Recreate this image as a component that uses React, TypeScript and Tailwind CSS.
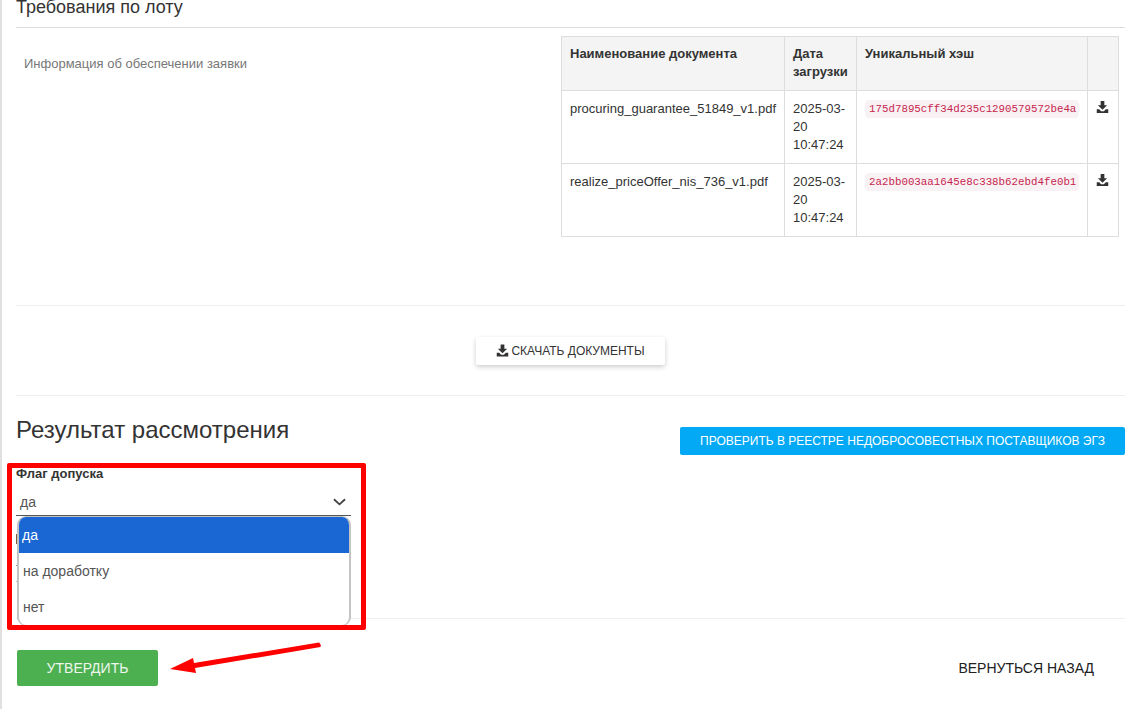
function DownloadIcon({ className }: { className?: string }) {
  return (
    <svg viewBox="0 0 14 14" className={className} fill="currentColor">
      <path d="M5 0.5h4v4.5h3L7 10 2 5h3z" />
      <path d="M0.8 9.5h2.7L5.5 11.5h3l2-2h2.7v4H0.8z" />
    </svg>
  );
}

const docs = [
  { name: 'procuring_guarantee_51849_v1.pdf', hash: '175d7895cff34d235c1290579572be4a' },
  { name: 'realize_priceOffer_nis_736_v1.pdf', hash: '2a2bb003aa1645e8c338b62ebd4fe0b1' },
];

function DocsTable() {
  return (
    <table className="w-[557px] table-fixed border-collapse text-[13px] leading-[18px] text-[#333]">
      <colgroup>
        <col className="w-[223px]" />
        <col className="w-[72px]" />
        <col className="w-[231px]" />
        <col className="w-[31px]" />
      </colgroup>
      <thead>
        <tr className="h-[54px] bg-[#f4f4f4] align-top font-bold">
          <th className="border border-[#ddd] px-2 py-2 text-left">Наименование документа</th>
          <th className="border border-[#ddd] px-2 py-2 text-left">Дата загрузки</th>
          <th className="border border-[#ddd] px-2 py-2 text-left">Уникальный хэш</th>
          <th className="border border-[#ddd]" />
        </tr>
      </thead>
      <tbody>
        {docs.map((doc) => (
          <tr key={doc.hash} className="h-[73px] align-top">
            <td className="border border-[#ddd] px-2 py-[9px] whitespace-nowrap">{doc.name}</td>
            <td className="border border-[#ddd] px-2 py-[9px]">2025-03-20 10:47:24</td>
            <td className="border border-[#ddd] px-2 py-[9px]">
              <code className="block w-[214px] rounded-[4px] bg-[#f9f2f4] px-1 font-['Liberation_Mono',monospace] text-[10.8px] leading-[18px] whitespace-nowrap text-[#c7254e]">
                {doc.hash}
              </code>
            </td>
            <td className="border border-[#ddd] px-2 py-[9px]">
              <DownloadIcon className="h-[14px] w-[13px] text-[#333]" />
            </td>
          </tr>
        ))}
      </tbody>
    </table>
  );
}

export default function App() {
  return (
    <div className="relative h-[709px] w-[1141px] overflow-hidden border-l-2 border-[#e0e0e0] bg-white font-['Liberation_Sans',Arial,sans-serif] text-[#333]">
      <div className="w-[1123px] pl-[14px]">
        {/* Lot requirements */}
        <h3 className="-mt-[3px] h-[31px] border-b border-[#ddd] text-[18px] leading-[20px] text-[#333]">Требования по лоту</h3>
        <div className="flex h-[278px] items-start justify-between border-b border-[#eee] pt-2 pr-[6px]">
          <p className="pt-[19px] pl-2 text-[13px] leading-[18px] text-[#777]">Информация об обеспечении заявки</p>
          <DocsTable />
        </div>
        <div className="flex h-[90px] items-center justify-center border-b border-[#eee]">
          <button className="flex h-[28px] w-[189px] items-center justify-center gap-[2px] rounded-[2px] bg-white text-[12px] text-[#333] shadow-[0_2px_5px_0_rgba(0,0,0,0.2)]">
            <DownloadIcon className="h-[13px] w-[13px]" />
            СКАЧАТЬ ДОКУМЕНТЫ
          </button>
        </div>

        {/* Review result */}
        <div className="flex h-[223px] items-start justify-between border-b border-[#eee]">
          <div className="w-[335px]">
            <h2 className="mt-[20px] text-[24px] leading-[27px] text-[#333]">Результат рассмотрения</h2>
            <label className="mt-[22px] block text-[13px] leading-[18px] font-bold text-[#333]">Флаг допуска</label>
            <div className="mt-[8px] flex h-[25px] items-center justify-between border-b border-[#555] pr-[5px] pb-[2px] pl-1 text-[14px] text-[#555]">
              <span>да</span>
              <svg viewBox="0 0 14 8" className="h-[8px] w-[13px]" fill="none" stroke="#444" strokeWidth="2">
                <path d="M1 1l6 5.5L13 1" />
              </svg>
            </div>
            {/* Next field, almost fully covered by the open list */}
            <div className="mt-[18px] h-[10px] w-[2px] bg-[#7a5c3c]" />
            <div className="mt-[21px] h-px w-[3px] bg-[#888]" />
            <div className="mt-[15px] h-px w-full bg-[#bbb]" />
          </div>
          <button className="mt-[31px] h-[28px] w-[445px] rounded-[2px] bg-[#03a9f4] text-[12px] text-white">
            ПРОВЕРИТЬ В РЕЕСТРЕ НЕДОБРОСОВЕСТНЫХ ПОСТАВЩИКОВ ЭГЗ
          </button>
        </div>

        {/* Footer actions */}
        <div className="flex items-center justify-between pt-[31px] pr-[31px] pl-[1px]">
          <button className="h-[36px] w-[141px] rounded-[2px] bg-[#4caf50] text-[14px] text-white/90">УТВЕРДИТЬ</button>
          <button className="text-[14px] text-[#212121]">ВЕРНУТЬСЯ НАЗАД</button>
        </div>
      </div>

      {/* Open select list */}
      <div className="absolute top-[516px] left-[15px] w-[334px] overflow-hidden rounded-[9px] border-x-2 border-t border-b border-[#c4c4c4] bg-white text-[14px] text-[#555]">
        <div className="flex h-[36px] items-center bg-[#1a66d2] pl-[3px] text-white">да</div>
        <div className="flex h-[36px] items-center pl-[4px]">на доработку</div>
        <div className="flex h-[36px] items-center pl-[4px]">нет</div>
      </div>

      {/* Screenshot annotations */}
      <div className="absolute top-[463px] left-[5px] h-[167px] w-[359px] rounded-[2px] border-[5px] border-[#ff0000]" />
      <svg className="absolute top-[640px] left-[166px]" width="155" height="36" viewBox="0 0 155 36" fill="#ff0000">
        <path d="M2 29L25 18L26 23L151 2.500Q153.500 4.500 152.500 7L27 28L28 33Z" />
      </svg>
    </div>
  );
}
